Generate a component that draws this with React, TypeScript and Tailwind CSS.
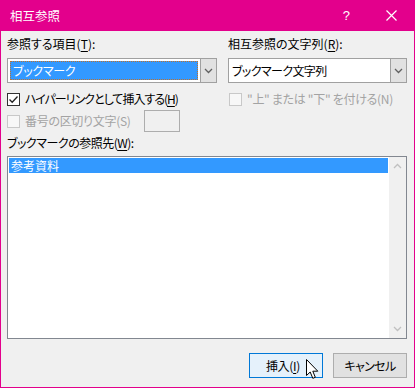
import React from "react";

const font = "[font-family:'Noto_Sans_CJK_JP','Noto_Sans',sans-serif] [font-feature-settings:'palt']";

function Chevron({ up = false, color = "#606060" }: { up?: boolean; color?: string }) {
  return (
    <svg width="9" height="6" viewBox="0 0 9 6">
      <path d={up ? "M1 5 L4.5 1.5 L8 5" : "M1 1 L4.5 4.5 L8 1"} fill="none" stroke={color} strokeWidth="1.3" />
    </svg>
  );
}

function U({ c }: { c: string }) {
  return <span className="underline underline-offset-2">{c}</span>;
}

export default function App() {
  return (
    <div className={`relative w-[415px] h-[388px] bg-[#f0f0f0] border-x border-b border-[#e3008c] text-[12px] leading-[16px] text-black tracking-[-0.3px] ${font}`}>
      {/* title bar */}
      <div className="h-[31px] bg-[#e3008c] flex items-center text-white -mx-px tracking-normal">
        <span className="ml-[10px] text-[12.5px]">相互参照</span>
        <span className="ml-auto mr-[36px] text-[13px] [font-family:'Liberation_Sans',sans-serif]">?</span>
        <svg width="11" height="11" viewBox="0 0 11 11" className="mr-[18px]">
          <path d="M0.5 0.5 L10.5 10.5 M10.5 0.5 L0.5 10.5" stroke="white" strokeWidth="1.2" />
        </svg>
      </div>

      <div className="pl-[6px] pr-[6px] pt-[5px]">
        <div className="flex gap-[11px]">
          {/* left column */}
          <div className="w-[210px]">
            <div className="h-[16px] tracking-normal">参照する項目(<U c="T" />):</div>
            <div className="mt-[6px] h-[25px] flex border border-[#a0a0a0] bg-white">
              <div className="flex-1 p-[2px]">
                <div className="h-full bg-[#3399ff] text-white border border-dotted border-[#c0702a] pl-[2px] flex items-center">ブックマーク</div>
              </div>
              <div className="w-[16px] bg-[#e1e1e1] border-l border-[#a0a0a0] flex items-center justify-center">
                <Chevron />
              </div>
            </div>
            <div className="mt-[7px] h-[18px] flex items-center">
              <div className="w-[13px] h-[13px] border border-[#333] bg-white flex items-center justify-center">
                <svg width="11" height="11" viewBox="0 0 11 11">
                  <path d="M1.5 5.5 L4.2 8.3 L9.5 2.5" fill="none" stroke="#222" strokeWidth="1.3" />
                </svg>
              </div>
              <span className="ml-[5px] tracking-[-1px]">ハイパーリンクとして挿入する(<U c="H" />)</span>
            </div>
            <div className="mt-[2px] h-[22px] flex items-center">
              <div className="w-[13px] h-[13px] border border-[#c8c8c8] bg-[#f7f7f7]" />
              <span className="ml-[5px] text-[#a3a3a3]">番号の区切り文字(S)</span>
              <div className="ml-auto mr-[37px] w-[36px] h-[22px] border border-[#adadad] bg-[#f0f0f0]" />
            </div>
          </div>

          {/* right column */}
          <div className="w-[179px]">
            <div className="h-[16px] tracking-normal">相互参照の文字列(<U c="R" />):</div>
            <div className="mt-[6px] h-[25px] flex border border-[#a0a0a0] bg-white">
              <div className="flex-1 pl-[3px] flex items-center tracking-[-0.6px]">ブックマーク文字列</div>
              <div className="w-[16px] bg-[#e1e1e1] border-l border-[#a0a0a0] flex items-center justify-center">
                <Chevron />
              </div>
            </div>
            <div className="mt-[7px] h-[18px] flex items-center pl-[1px]">
              <div className="w-[13px] h-[13px] border border-[#c8c8c8] bg-[#f7f7f7]" />
              <span className="ml-[5px] text-[#a3a3a3]">"上" または "下" を付ける(N)</span>
            </div>
          </div>
        </div>

        <div className="mt-[3px] h-[16px] tracking-[-0.5px]">ブックマークの参照先(<U c="W" />):</div>

        <div className="mt-[5px] w-[400px] h-[183px] border border-[#828790] bg-white flex">
          <div className="flex-1 p-px">
            <div className="h-[15px] bg-[#3399ff] text-white pl-[2px] flex items-center tracking-normal">参考資料</div>
          </div>
          <div className="w-[17px] bg-[#f0f0f0] flex flex-col items-center justify-between py-[6px]">
            <Chevron up color="#c0c0c0" />
            <Chevron color="#c0c0c0" />
          </div>
        </div>

        <div className="mt-[14px] w-[400px] flex justify-end gap-[10px]">
          <div className="w-[74px] h-[25px] border border-[#0078d7] bg-[#e5f1fb] flex items-center justify-center">
            <span className="-ml-[6px]">挿入(<U c="I" />)</span>
          </div>
          <div className="w-[74px] h-[25px] border border-[#adadad] bg-[#e1e1e1] flex items-center justify-center tracking-[-0.6px]">キャンセル</div>
        </div>
      </div>

      {/* mouse cursor */}
      <svg className="absolute left-[305px] top-[359px]" width="14" height="21" viewBox="0 0 14 21">
        <path d="M0.5 0.5 L0.5 16.5 L4.2 13 L6.8 19.3 L9.3 18.3 L6.8 12.2 L11.8 12.2 Z" fill="white" stroke="black" strokeWidth="1" strokeLinejoin="miter" />
      </svg>
    </div>
  );
}
